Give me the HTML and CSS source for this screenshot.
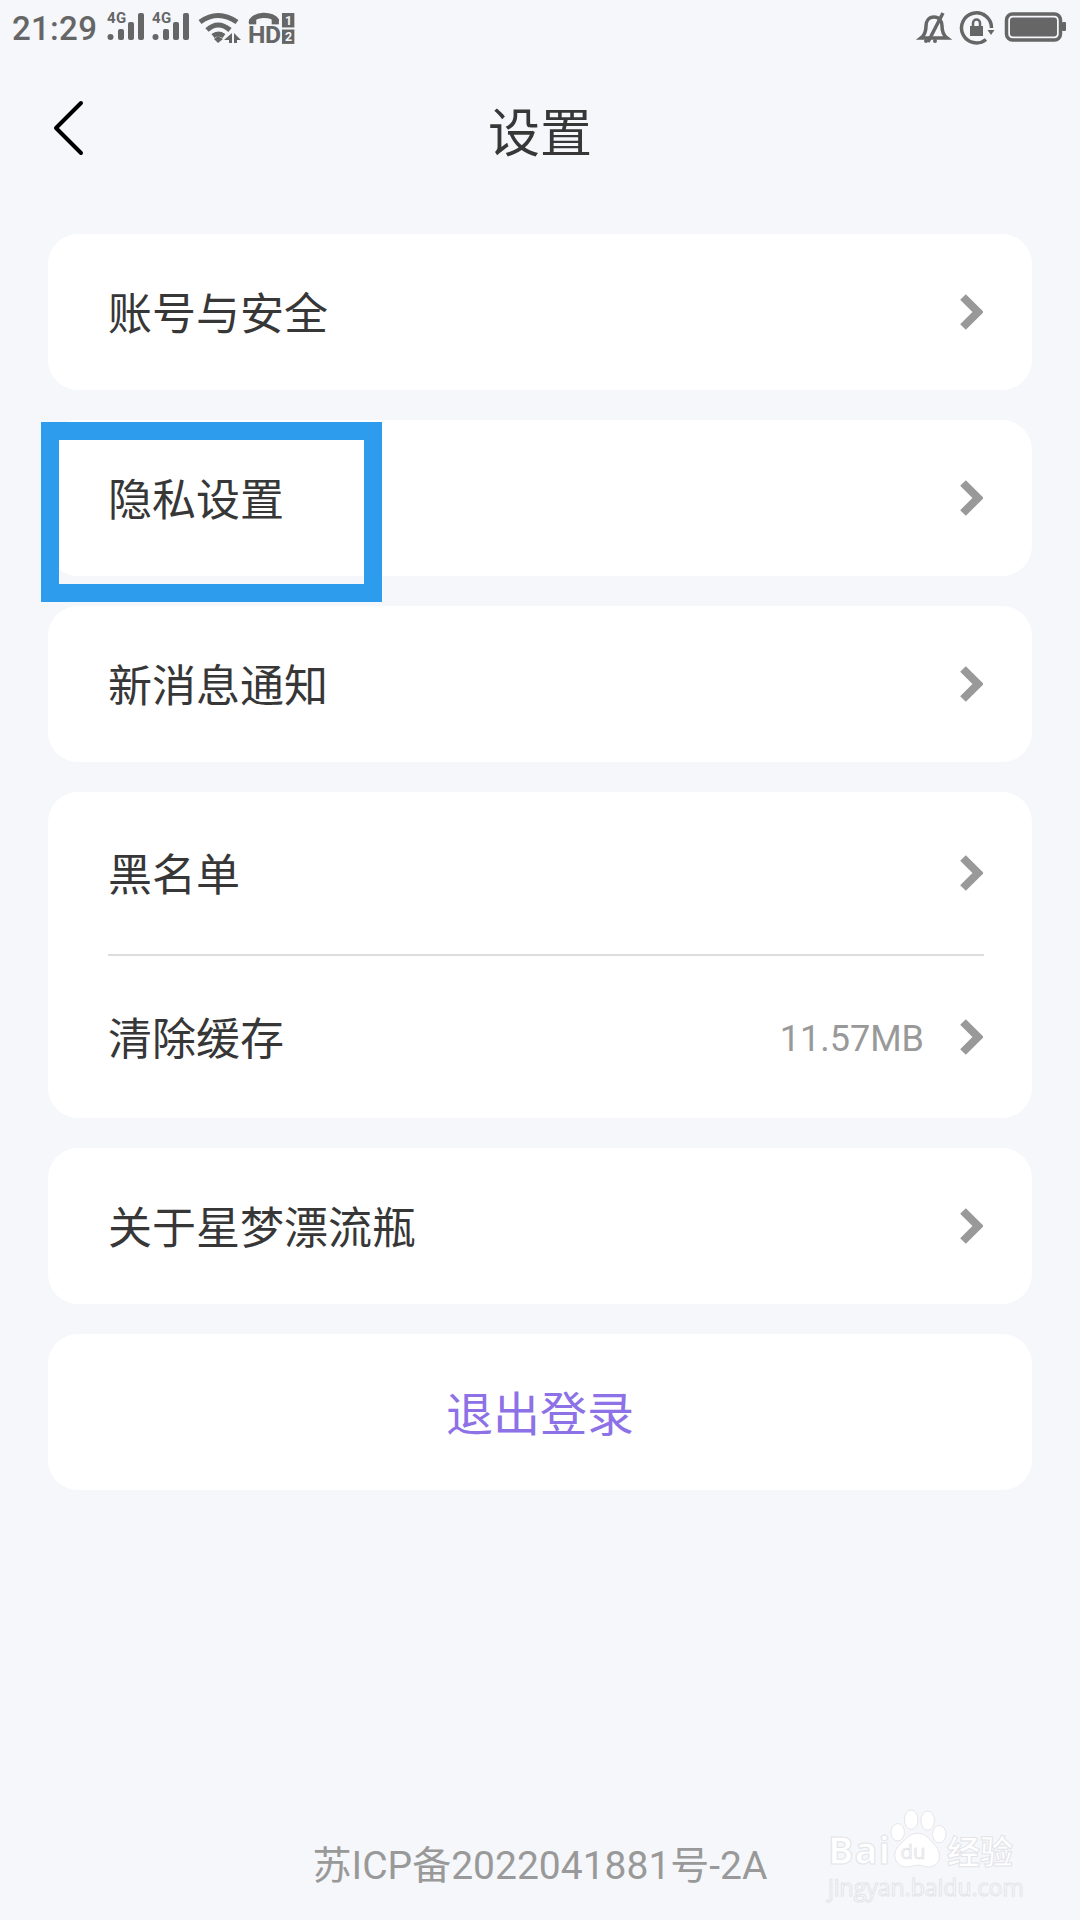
FILE: index.html
```html
<!DOCTYPE html>
<html lang="zh-CN">
<head>
<meta charset="utf-8">
<title>设置</title>
<link rel="stylesheet" href="styles.css">
</head>
<body>
<div class="page">
  <div class="status">
    <span class="time">21:29</span>
    <svg class="ic sig" viewBox="0 0 38 30"><text x="0" y="10" class="st">4G</text><circle cx="3.500" cy="24" r="3" class="f"/><rect x="11" y="16" width="6" height="11" rx="2" class="f"/><rect x="21" y="9" width="6" height="18" rx="2" class="f"/><rect x="31" y="0" width="6" height="27" rx="2" class="f"/></svg>
    <svg class="ic sig" viewBox="0 0 38 30"><text x="0" y="10" class="st">4G</text><circle cx="3.500" cy="24" r="3" class="f"/><rect x="11" y="16" width="6" height="11" rx="2" class="f"/><rect x="21" y="9" width="6" height="18" rx="2" class="f"/><rect x="31" y="0" width="6" height="27" rx="2" class="f"/></svg>
    <svg class="ic wifi" viewBox="0 0 44 30"><path d="M2 8Q20 -5 39 8M9 16Q20 6 32 16M15 22Q20 18 26 22" class="s"/><path d="M16 25l4-3 5 3-5 4z" class="f"/><path d="M34 19v10h-3v-3h-5zM36 19l7 7h-4v3h-3z" class="f"/></svg>
    <svg class="ic hd" viewBox="0 0 46 32"><path d="M3 11C4 1 25 1 28 9" class="s2"/><rect x="1" y="7" width="7" height="5" class="f"/><rect x="23" y="7" width="7" height="5" class="f"/><text x="0" y="30" class="hdt">HD</text><rect x="33" y="1" width="12" height="14" class="f"/><text x="36" y="12.500" class="n">1</text><rect x="33" y="17" width="12" height="14" class="f"/><text x="36" y="28.500" class="n">2</text></svg>
    <span class="spacer"></span>
    <svg class="ic bell" viewBox="0 0 30 32"><path d="M2 26c4-3 5-7 5-12 0-5 3-9 8-9s8 4 8 9c0 5 1 9 5 12z" class="s"/><path d="M9 30L24 1" class="s"/><circle cx="7" cy="29" r="2" class="f"/><circle cx="16" cy="29" r="2" class="f"/></svg>
    <svg class="ic lock" viewBox="0 0 34 34"><path d="M26 28.500A15 15 0 1 1 31.500 17" class="s"/><path d="M27.500 19l7 0-3.500 5z" class="f"/><rect x="10" y="15" width="13" height="10" class="f"/><path d="M13 15v-3a3.500 3.500 0 0 1 7 0v3" class="s thin"/></svg>
    <svg class="ic batt" viewBox="0 0 62 32"><rect x="1.500" y="3" width="54" height="26" rx="6" class="s"/><rect x="5" y="6.500" width="47" height="19" rx="3" class="f"/><rect x="57" y="11" width="4" height="9" rx="1" class="f"/></svg>
  </div>

  <header class="bar">
    <svg class="back" viewBox="0 0 32 56"><path d="M29 3L4 28l25 25"/></svg>
    <h1 class="title">设置</h1>
  </header>

  <main class="list">
    <section class="card"><div class="row"><span class="label">账号与安全</span><svg class="chev" viewBox="0 0 24 38"><path d="M4 4l15 15L4 34"/></svg></div></section>
    <section class="card"><div class="row"><span class="label">隐私设置</span><svg class="chev" viewBox="0 0 24 38"><path d="M4 4l15 15L4 34"/></svg></div></section>
    <section class="card"><div class="row"><span class="label">新消息通知</span><svg class="chev" viewBox="0 0 24 38"><path d="M4 4l15 15L4 34"/></svg></div></section>
    <section class="card">
      <div class="row tall"><span class="label">黑名单</span><svg class="chev" viewBox="0 0 24 38"><path d="M4 4l15 15L4 34"/></svg></div>
      <div class="rule"></div>
      <div class="row tall"><span class="label">清除缓存</span><span class="value">11.57MB</span><svg class="chev" viewBox="0 0 24 38"><path d="M4 4l15 15L4 34"/></svg></div>
    </section>
    <section class="card"><div class="row"><span class="label">关于星梦漂流瓶</span><svg class="chev" viewBox="0 0 24 38"><path d="M4 4l15 15L4 34"/></svg></div></section>
    <section class="card"><div class="row center"><span class="logout">退出登录</span></div></section>
  </main>

  <footer class="foot">苏ICP备2022041881号-2A</footer>

  <div class="mark-box"></div>

  <div class="wm">
    <div class="wm-top">
      <span class="wm-bai">Bai</span>
      <svg class="wm-paw" viewBox="0 0 60 66">
        <ellipse cx="23" cy="12" rx="7" ry="10"/><ellipse cx="40" cy="13" rx="7" ry="10"/><ellipse cx="9" cy="25" rx="7" ry="9"/><ellipse cx="52" cy="27" rx="7" ry="9"/>
        <path d="M30 26c9 0 13 8 18 13 6 6 7 21-7 22-4 0-7-2-11-2s-7 2-12 2C5 60 3 46 10 39c6-5 10-13 20-13z"/>
        <text x="12" y="53" class="wm-du">du</text>
      </svg>
      <span class="wm-cn">经验</span>
    </div>
    <div class="wm-url">jingyan.baidu.com</div>
  </div>
</div>
</body>
</html>
```
FILE: styles.css
```css
* { box-sizing: border-box; }
html, body { margin: 0; padding: 0; }
body {
  background: #f5f7fb;
  font-family: Roboto, "Noto Sans CJK SC", sans-serif;
  color: #373737;
}
.page {
  position: relative;
  width: 1080px;
  height: 1920px;
  display: flex;
  flex-direction: column;
  overflow: hidden;
}
.status {
  height: 56px;
  padding: 11px 13px 0 12px;
  display: flex;
  align-items: flex-start;
  color: #666;
}
.time { font-size: 33px; font-weight: 500; line-height: 36px; color: #666; letter-spacing: .3px; }
.spacer { flex: 1; }
.ic { display: block; height: 30px; overflow: visible; }
.sig { width: 38px; margin: 2px 0 0 10px; }
.sig + .sig { margin-left: 7px; }
.wifi { width: 44px; margin: 3px 0 0 8px; }
.hd { width: 46px; height: 32px; margin: 0 0 0 6px; transform-origin: 0 0; transform: translateY(1px) scale(1.03); }
.bell { width: 30px; height: 32px; margin: 1px 0 0 0; }
.lock { width: 34px; height: 34px; margin: 0 0 0 11px; }
.batt { width: 62px; height: 32px; margin: 0 0 0 11px; }
.f { fill: #666; }
.s { fill: none; stroke: #666; stroke-width: 3.500; }
.s.thin { stroke-width: 2.500; }
.s2 { fill: none; stroke: #666; stroke-width: 5; }
.wifi .s { stroke-width: 5; }
.st { font: 700 15px Roboto, sans-serif; fill: #666; letter-spacing: .5px; }
.hdt { font: 700 24px Roboto, sans-serif; fill: #666; letter-spacing: -.5px; }
.n { font: 700 12px Roboto, sans-serif; fill: #f5f7fb; }

.bar {
  height: 158px;
  position: relative;
  display: flex;
  align-items: center;
  justify-content: center;
}
.back {
  position: absolute;
  left: 52px;
  top: 44px;
  width: 32px;
  height: 56px;
  fill: none;
  stroke: #000;
  stroke-width: 4;
  stroke-linecap: round;
  stroke-linejoin: round;
}
.title { margin: 0; font-size: 52px; font-weight: 400; line-height: 64px; color: #373737; }

.list {
  padding: 20px 48px 0;
  display: flex;
  flex-direction: column;
  gap: 30px;
}
.card { background: #fff; border-radius: 30px; }
.row {
  height: 156px;
  display: flex;
  align-items: center;
  padding: 0 49px 0 60px;
}
.row.tall { height: 162px; }
.row.center { justify-content: center; padding: 0; }
.label { flex: 1; font-size: 44px; line-height: 56px; padding-top: 5px; color: #373737; }
.value { font-size: 36px; color: #999; margin-right: 35px; padding-top: 4px; }
.chev {
  width: 24px;
  height: 38px;
  fill: none;
  stroke: #999;
  stroke-width: 8;
}
.rule { height: 2px; margin: 0 48px 0 60px; background: #ddd; }
.logout { font-size: 47px; color: #8c72e6; padding-bottom: 4px; }

.foot {
  margin-top: auto;
  padding-bottom: 28px;
  text-align: center;
  font-size: 39px;
  line-height: 52px;
  color: #999;
}
.mark-box {
  position: absolute;
  left: 41px;
  top: 422px;
  width: 341px;
  height: 180px;
  border: solid #2d9cec;
  border-width: 18px;
}
.wm {
  position: absolute;
  left: 828px;
  top: 1804px;
  width: 200px;
  color: #fff;
  -webkit-text-stroke: 1px #e4e4e8;
}
.wm-top { display: flex; align-items: flex-end; height: 68px; }
.wm-bai { font: 700 38px/46px "Open Sans", sans-serif; letter-spacing: 1px; }
.wm-paw { width: 58px; height: 64px; margin: 0 0 0 -2px; fill: #fff; stroke: #e4e4e8; stroke-width: 1; }
.wm-du { font: 400 21px "Open Sans", sans-serif; fill: #f5f7fb; stroke: #dcdce0; stroke-width: .6; }
.wm-cn { font: 700 33px/44px "Noto Sans CJK SC", sans-serif; }
.wm-url { font: 400 23px/30px "Open Sans", sans-serif; }
```
